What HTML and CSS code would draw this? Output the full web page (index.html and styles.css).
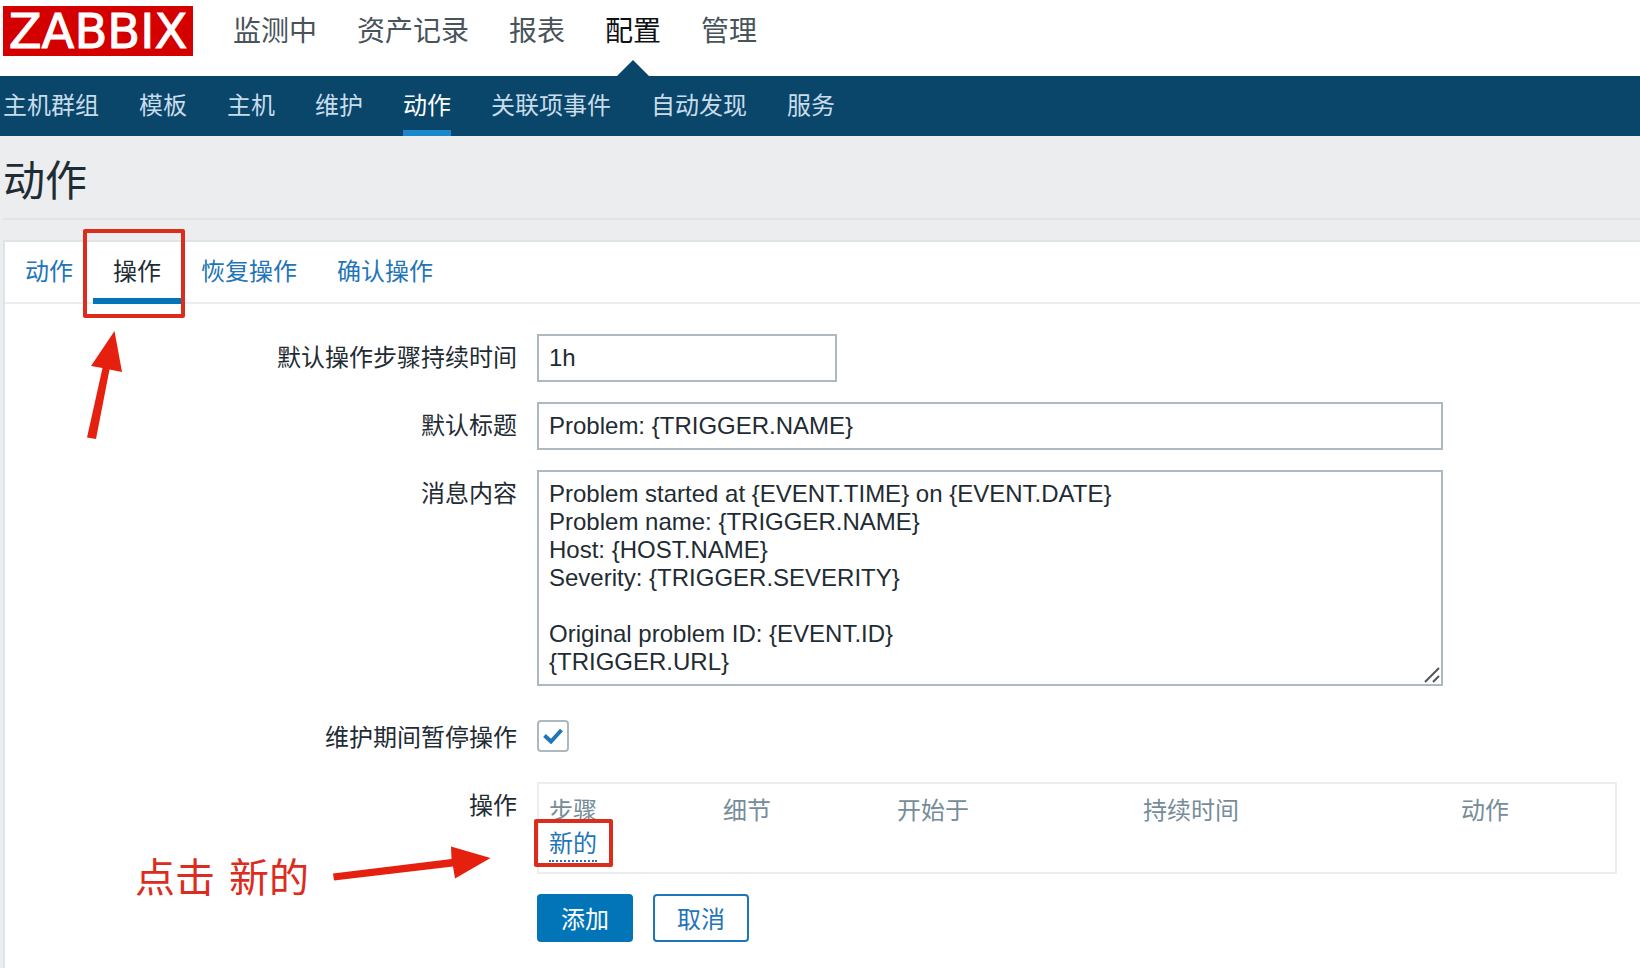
FILE: index.html
```html
<!DOCTYPE html>
<html lang="zh-CN">
<head>
<meta charset="utf-8">
<title>Zabbix - 动作</title>
<link rel="stylesheet" href="styles.css">
</head>
<body>
<header class="header">
  <a class="logo" href="#">ZABBIX</a>
  <nav class="main-nav">
    <a href="#">监测中</a>
    <a href="#">资产记录</a>
    <a href="#">报表</a>
    <a class="selected" href="#">配置</a>
    <a href="#">管理</a>
  </nav>
</header>
<nav class="sub-nav">
  <a href="#">主机群组</a>
  <a href="#">模板</a>
  <a href="#">主机</a>
  <a href="#">维护</a>
  <a class="selected" href="#">动作</a>
  <a href="#">关联项事件</a>
  <a href="#">自动发现</a>
  <a href="#">服务</a>
</nav>
<main class="page">
  <h1 class="title">动作</h1>
  <section class="panel">
    <nav class="tabs">
      <a class="tab" href="#">动作</a>
      <div class="tab-marked">
        <a class="tab selected" href="#">操作</a>
        <span class="mark mark-tab"></span>
        <svg class="arrow arrow-up" width="40" height="112" viewBox="0 0 40 112" aria-hidden="true"><path d="M27.500 0 35 41 22.500 38.500 9 108 0 106.500 15.500 37 4 35z"/></svg>
      </div>
      <a class="tab" href="#">恢复操作</a>
      <a class="tab" href="#">确认操作</a>
    </nav>
    <form class="form">
      <div class="row">
        <label class="label" for="period">默认操作步骤持续时间</label>
        <div class="field"><input class="text short" id="period" type="text" value="1h"></div>
      </div>
      <div class="row">
        <label class="label" for="subject">默认标题</label>
        <div class="field"><input class="text" id="subject" type="text" value="Problem: {TRIGGER.NAME}"></div>
      </div>
      <div class="row row-message">
        <label class="label" for="message">消息内容</label>
        <div class="field">
          <textarea class="text message" id="message" rows="7">Problem started at {EVENT.TIME} on {EVENT.DATE}
Problem name: {TRIGGER.NAME}
Host: {HOST.NAME}
Severity: {TRIGGER.SEVERITY}

Original problem ID: {EVENT.ID}
{TRIGGER.URL}</textarea>
          <svg class="grip" width="16" height="16" viewBox="0 0 16 16" aria-hidden="true"><path d="M1 15 15 1M9 15 15 9"/></svg>
        </div>
      </div>
      <div class="row">
        <label class="label" for="pause">维护期间暂停操作</label>
        <div class="field check-field">
          <input class="check" id="pause" type="checkbox" checked>
          <svg class="tick" width="20" height="16" viewBox="0 0 20 16" aria-hidden="true"><path d="M1.500 7.500 8 13.500 18.500 2"/></svg>
        </div>
      </div>
      <div class="row">
        <span class="label">操作</span>
        <div class="operations">
          <table class="steps">
            <thead>
              <tr><th>步骤</th><th>细节</th><th>开始于</th><th>持续时间</th><th>动作</th></tr>
            </thead>
            <tbody>
              <tr><td colspan="5"><span class="link-marked"><button class="link" type="button">新的</button><span class="mark mark-link"></span></span></td></tr>
            </tbody>
          </table>
        </div>
        <div class="note">
          <div class="note-text"><span>点击</span> <span>新的</span></div>
          <svg class="arrow" width="159" height="34" viewBox="0 0 159 34" aria-hidden="true"><path d="M158.500 12 123 32.500 121 20.500 2 34.500 1 27.500 119.500 13 119 .5z"/></svg>
        </div>
      </div>
      <div class="row">
        <span class="label"></span>
        <div class="buttons">
          <button class="button primary" type="submit">添加</button>
          <button class="button" type="button">取消</button>
        </div>
      </div>
    </form>
  </section>
</main>
</body>
</html>
```
FILE: styles.css
```css
* {
  box-sizing: border-box;
}

body {
  margin: 0;
  min-height: 100vh;
  display: flex;
  flex-direction: column;
  overflow: hidden;
  background: #ebedef;
  color: #1f2c33;
  font: 24px/28px "Liberation Sans", "Noto Sans CJK SC", sans-serif;
}

a {
  text-decoration: none;
}

.header {
  display: flex;
  align-items: flex-start;
  gap: 40px;
  height: 76px;
  padding: 6px 3px 0;
  background: #fff;
}

.logo {
  width: 190px;
  background: #d40000;
  color: #fff;
  font: 48px/50px "DejaVu Sans", sans-serif;
  text-align: center;
  -webkit-text-stroke: 1px;
}

.main-nav {
  display: flex;
  gap: 40px;
  height: 70px;
  font-size: 28px;
  line-height: 52px;
}

.main-nav a {
  position: relative;
  color: #48535a;
}

.main-nav .selected {
  color: #0e1012;
}

.main-nav .selected::after {
  content: "";
  position: absolute;
  bottom: 0;
  left: 50%;
  margin-left: -16px;
  border: solid transparent;
  border-width: 0 16px 16px;
  border-bottom-color: #0a466a;
}

.sub-nav {
  display: flex;
  gap: 40px;
  height: 60px;
  padding: 0 3px;
  background: #0a466a;
  line-height: 60px;
}

.sub-nav a {
  color: #c8dcea;
}

.sub-nav .selected {
  border-bottom: 6px solid #1a86cc;
  color: #fff;
}

.page {
  display: flex;
  flex: 1;
  flex-direction: column;
  gap: 20px;
  padding-left: 3px;
}

.title {
  margin: 0;
  padding: 16px 0 6px;
  border-bottom: 2px solid #dfe4e7;
  font-size: 42px;
  font-weight: 400;
  line-height: 60px;
}

.panel {
  flex: 1;
  border: solid #dfe4e7;
  border-width: 2px 0 0 2px;
  background: #fff;
}

.tabs {
  display: flex;
  height: 62px;
  border-bottom: 2px solid #ebeef0;
}

.tab {
  display: block;
  height: 62px;
  padding: 0 20px;
  color: #1f75b8;
  line-height: 60px;
}

.tab.selected {
  border-bottom: 6px solid #0275b8;
  color: #1f2c33;
}

.tab-marked {
  position: relative;
}

.mark {
  position: absolute;
  border: 4px solid #dc2c1e;
  border-radius: 2px;
  pointer-events: none;
}

.mark-tab {
  inset: -13px -4px -16px -10px;
}

.arrow {
  fill: #e6200e;
  overflow: visible;
}

.arrow-up {
  position: absolute;
  top: 89px;
  left: -6px;
}

.form {
  display: flex;
  flex-direction: column;
  gap: 20px;
  padding: 30px 23px 26px 0;
}

.row {
  position: relative;
  display: flex;
  gap: 20px;
}

.row-message {
  padding-bottom: 8px;
}

.label {
  flex: 0 0 512px;
  line-height: 48px;
  text-align: right;
}

.field {
  position: relative;
  flex: 0 1 906px;
  min-width: 0;
}

.text {
  display: block;
  width: 100%;
  height: 48px;
  margin: 0;
  padding: 8px 10px;
  border: 2px solid #acb9bf;
  border-radius: 0;
  background: #fff;
  color: inherit;
  font: inherit;
}

.short {
  width: 300px;
}

.message {
  height: auto;
  overflow: hidden;
  resize: none;
}

.grip {
  position: absolute;
  right: 3px;
  bottom: 3px;
  fill: none;
  stroke: #555;
  stroke-width: 2;
}

.check-field {
  display: flex;
  align-items: center;
  height: 44px;
  margin-bottom: 4px;
}

.check {
  appearance: none;
  width: 32px;
  height: 32px;
  margin: 0;
  border: 2px solid #acb9bf;
  border-radius: 4px;
  background: #fff;
}

.tick {
  position: absolute;
  left: 6px;
  fill: none;
  stroke: #1f75b8;
  stroke-width: 4;
  pointer-events: none;
}

.check:not(:checked) + .tick {
  display: none;
}

.operations {
  flex: 1;
  padding: 10px;
  border: 2px solid #ebeef0;
}

.steps {
  width: 100%;
  border-collapse: collapse;
}

.steps th {
  height: 34px;
  padding: 0 10px 0 0;
  color: #768d99;
  font-weight: 400;
  line-height: 34px;
  text-align: left;
  white-space: nowrap;
}

.steps th:last-child {
  padding-right: 0;
}

.steps td {
  height: 34px;
  padding: 0;
  vertical-align: top;
}

.link-marked {
  position: relative;
  display: inline-block;
  vertical-align: top;
}

.link {
  display: block;
  height: 34px;
  padding: 0;
  border: 0;
  border-bottom: 2px dotted #1f75b8;
  background: none;
  color: #1f75b8;
  font: inherit;
  line-height: 32px;
}

.mark-link {
  inset: -9px -16px -5px -15px;
}

.note {
  position: absolute;
  top: 64px;
  left: 130px;
  display: flex;
  gap: 23px;
}

.note-text {
  display: flex;
  gap: 14px;
  color: #dc2c1e;
  font-size: 40px;
  line-height: 64px;
  white-space: nowrap;
}

.buttons {
  display: flex;
  gap: 20px;
}

.button {
  height: 48px;
  padding: 4px 22px 0;
  border: 2px solid #1f75b8;
  border-radius: 4px;
  background: #fff;
  color: #1f75b8;
  font: inherit;
  line-height: 40px;
}

.button.primary {
  border-color: #0275b8;
  background: #0275b8;
  color: #fff;
}
```
